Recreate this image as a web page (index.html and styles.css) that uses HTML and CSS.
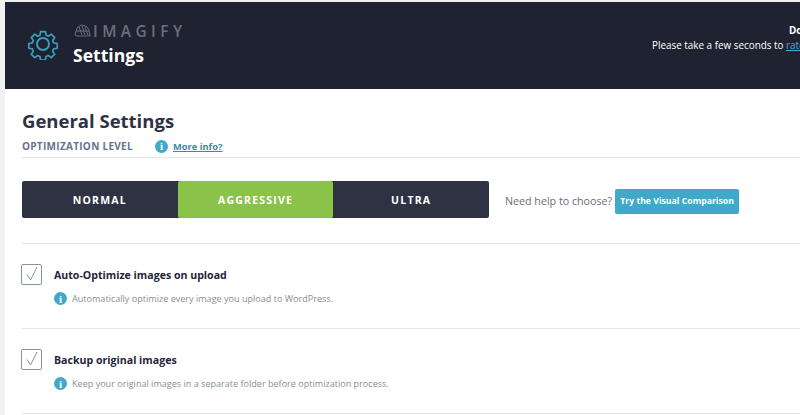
FILE: index.html
```html
<!DOCTYPE html>
<html lang="en">
<head>
  <meta charset="UTF-8" />
  <title>Imagify Settings</title>
  <link rel="stylesheet" href="styles.css">
</head>
<body>
  <div class="page">
    <header class="top-bar">
      <svg class="gear" width="32" height="32" viewBox="0 0 32 32">
        <path d="M13.2 1.5h5.6l.8 4.2 2.7 1.1 3.5-2.4 4 4-2.4 3.5 1.1 2.7 4.200.8v5.600l-4.200.8-1.100 2.700 2.400 3.500-4 4-3.500-2.400-2.700 1.100-.8 4.200h-5.600l-.8-4.200-2.700-1.100-3.500 2.400-4-4 2.400-3.500-1.100-2.700-4.200-.8v-5.600l4.200-.8 1.100-2.700-2.400-3.500 4-4 3.500 2.400 2.700-1.100z" transform="translate(2.400 2.400) scale(.85)"/>
        <circle cx="16" cy="16" r="6"/>
      </svg>
      <div class="brand">
        <div class="logo">
          <svg width="17" height="13" viewBox="0 0 17 13">
            <path d="M1 11 3 4l4-3 5 1 3 4 1 6H3zM5 3l3 8M8 2l3 9M11 3l3 8M2 7h13"/>
          </svg>
          <span>IMAGIFY</span>
        </div>
        <div class="page-name">Settings</div>
      </div>
      <div class="notice">
        <div class="notice-head">Do</div>
        <div>Please take a few seconds to <a href="#">rate</a></div>
      </div>
    </header>

    <main class="content">
      <h1>General Settings</h1>
      <div class="section-title">
        <h2>OPTIMIZATION LEVEL</h2>
        <span class="info">i</span>
        <a href="#">More info?</a>
      </div>

      <div class="levels">
        <div class="switch">
          <div class="level">NORMAL</div>
          <div class="level active">AGGRESSIVE</div>
          <div class="level">ULTRA</div>
        </div>
        <span class="help">Need help to choose?</span>
        <a class="compare" href="#">Try the Visual Comparison</a>
      </div>

      <div class="option">
        <span class="check"><svg width="20" height="20" viewBox="0 0 20 20"><path d="M5 10.500 8.500 16 15 3"/></svg></span>
        <div>
          <div class="option-name">Auto-Optimize images on upload</div>
          <div class="option-desc"><span class="info">i</span>Automatically optimize every image you upload to WordPress.</div>
        </div>
      </div>

      <div class="option">
        <span class="check"><svg width="20" height="20" viewBox="0 0 20 20"><path d="M5 10.500 8.500 16 15 3"/></svg></span>
        <div>
          <div class="option-name">Backup original images</div>
          <div class="option-desc"><span class="info">i</span>Keep your original images in a separate folder before optimization process.</div>
        </div>
      </div>
    </main>
  </div>
</body>
</html>
```

FILE: styles.css
```css
* {
  box-sizing: border-box;
}

html,
body {
  height: 100%;
  overflow: hidden;
}

body {
  margin: 0;
  padding: 2px 0 0 5px;
  background-color: #f1f1f1;
  color: #2e3243;
  font-family: "Open Sans", sans-serif;
}

.page {
  width: 795px;
  height: 413px;
  overflow: hidden;
  background-color: #fff;
}

.top-bar {
  display: flex;
  align-items: center;
  height: 87px;
  padding: 0 0 0 22px;
  background-color: #1f2230;
  color: #fff;
}

.gear {
  flex: none;
  margin: -4px 14px 0 0;
  fill: none;
  stroke: #3a9dbb;
  stroke-width: 2;
  stroke-linejoin: round;
}

.brand {
  flex: none;
  width: 579px;
}

.logo {
  display: flex;
  align-items: center;
  height: 18px;
  margin-top: -2px;
  color: #6b6e7a;
  font-size: 15.500px;
  font-weight: 600;
  letter-spacing: 4.4px;
}

.logo svg {
  margin: 0 2px 0 1px;
  fill: none;
  stroke: #6b6e7a;
  stroke-width: 1;
}

.page-name {
  margin-top: 3px;
  font-size: 17.600px;
  line-height: 25px;
  font-weight: 700;
}

.notice {
  flex: none;
  width: 148px;
  margin-top: -15px;
  font-size: 9.900px;
  line-height: 15px;
  white-space: nowrap;
}

.notice-head {
  padding-left: 137px;
  font-weight: 700;
}

.notice a {
  color: #40b1d0;
}

.content {
  padding: 0 0 0 17px;
}

h1 {
  margin: 19px 0 0;
  font-size: 18.500px;
  line-height: 25px;
  font-weight: 700;
}

.section-title {
  display: flex;
  align-items: center;
  height: 23px;
  margin-top: 2px;
  border-bottom: 1px solid #e5e5e5;
  font-size: 9.300px;
}

h2 {
  width: 133px;
  margin: 0;
  color: #5f758e;
  font-size: 10px;
  font-weight: 700;
  letter-spacing: 0.3px;
}

.section-title a {
  margin-left: 5px;
  color: #338ea6;
  font-weight: 700;
}

.info {
  display: inline-flex;
  align-items: center;
  justify-content: center;
  flex: none;
  width: 13px;
  height: 13px;
  border-radius: 50%;
  background-color: #40a8c8;
  color: #fff;
  font-family: "Liberation Serif", serif;
  font-size: 11px;
  font-weight: 700;
}

.levels {
  display: flex;
  align-items: center;
  height: 86px;
  padding-bottom: 2px;
  border-bottom: 1px solid #e5e5e5;
}

.switch {
  display: flex;
  width: 467px;
  height: 37px;
  margin-right: 16px;
  border-radius: 2px;
  background-color: #2e3243;
}

.level {
  display: flex;
  align-items: center;
  justify-content: center;
  flex: 1;
  color: #fff;
  font-size: 10.500px;
  font-weight: 700;
  letter-spacing: 1.2px;
}

.level.active {
  border-radius: 2px;
  background-color: #8bc34a;
}

.help {
  margin: 3px 3px 0 0;
  color: #6b6e7a;
  font-size: 10.700px;
}

.compare {
  display: flex;
  align-items: center;
  height: 25px;
  margin-top: 3px;
  padding: 0 5px;
  border-radius: 2px;
  background-color: #40a8c8;
  color: #fff;
  font-size: 8.700px;
  font-weight: 700;
  text-decoration: none;
}

.option {
  display: flex;
  height: 85px;
  padding-top: 20px;
  border-bottom: 1px solid #e5e5e5;
}

.check {
  flex: none;
  width: 21px;
  height: 21px;
  margin: 0 12px 0 -1px;
  border: 1px solid #8a93a0;
  border-radius: 2px;
}

.check svg {
  display: block;
  margin: -1px 0 0;
  fill: none;
  stroke: #8a93a0;
  stroke-width: 1;
}

.option-name {
  color: #23263a;
  font-size: 10.600px;
  line-height: 22px;
  font-weight: 700;
}

.option-desc {
  display: flex;
  align-items: center;
  gap: 5px;
  margin-top: 6px;
  color: #8a8e98;
  font-size: 9.070px;
}
```
